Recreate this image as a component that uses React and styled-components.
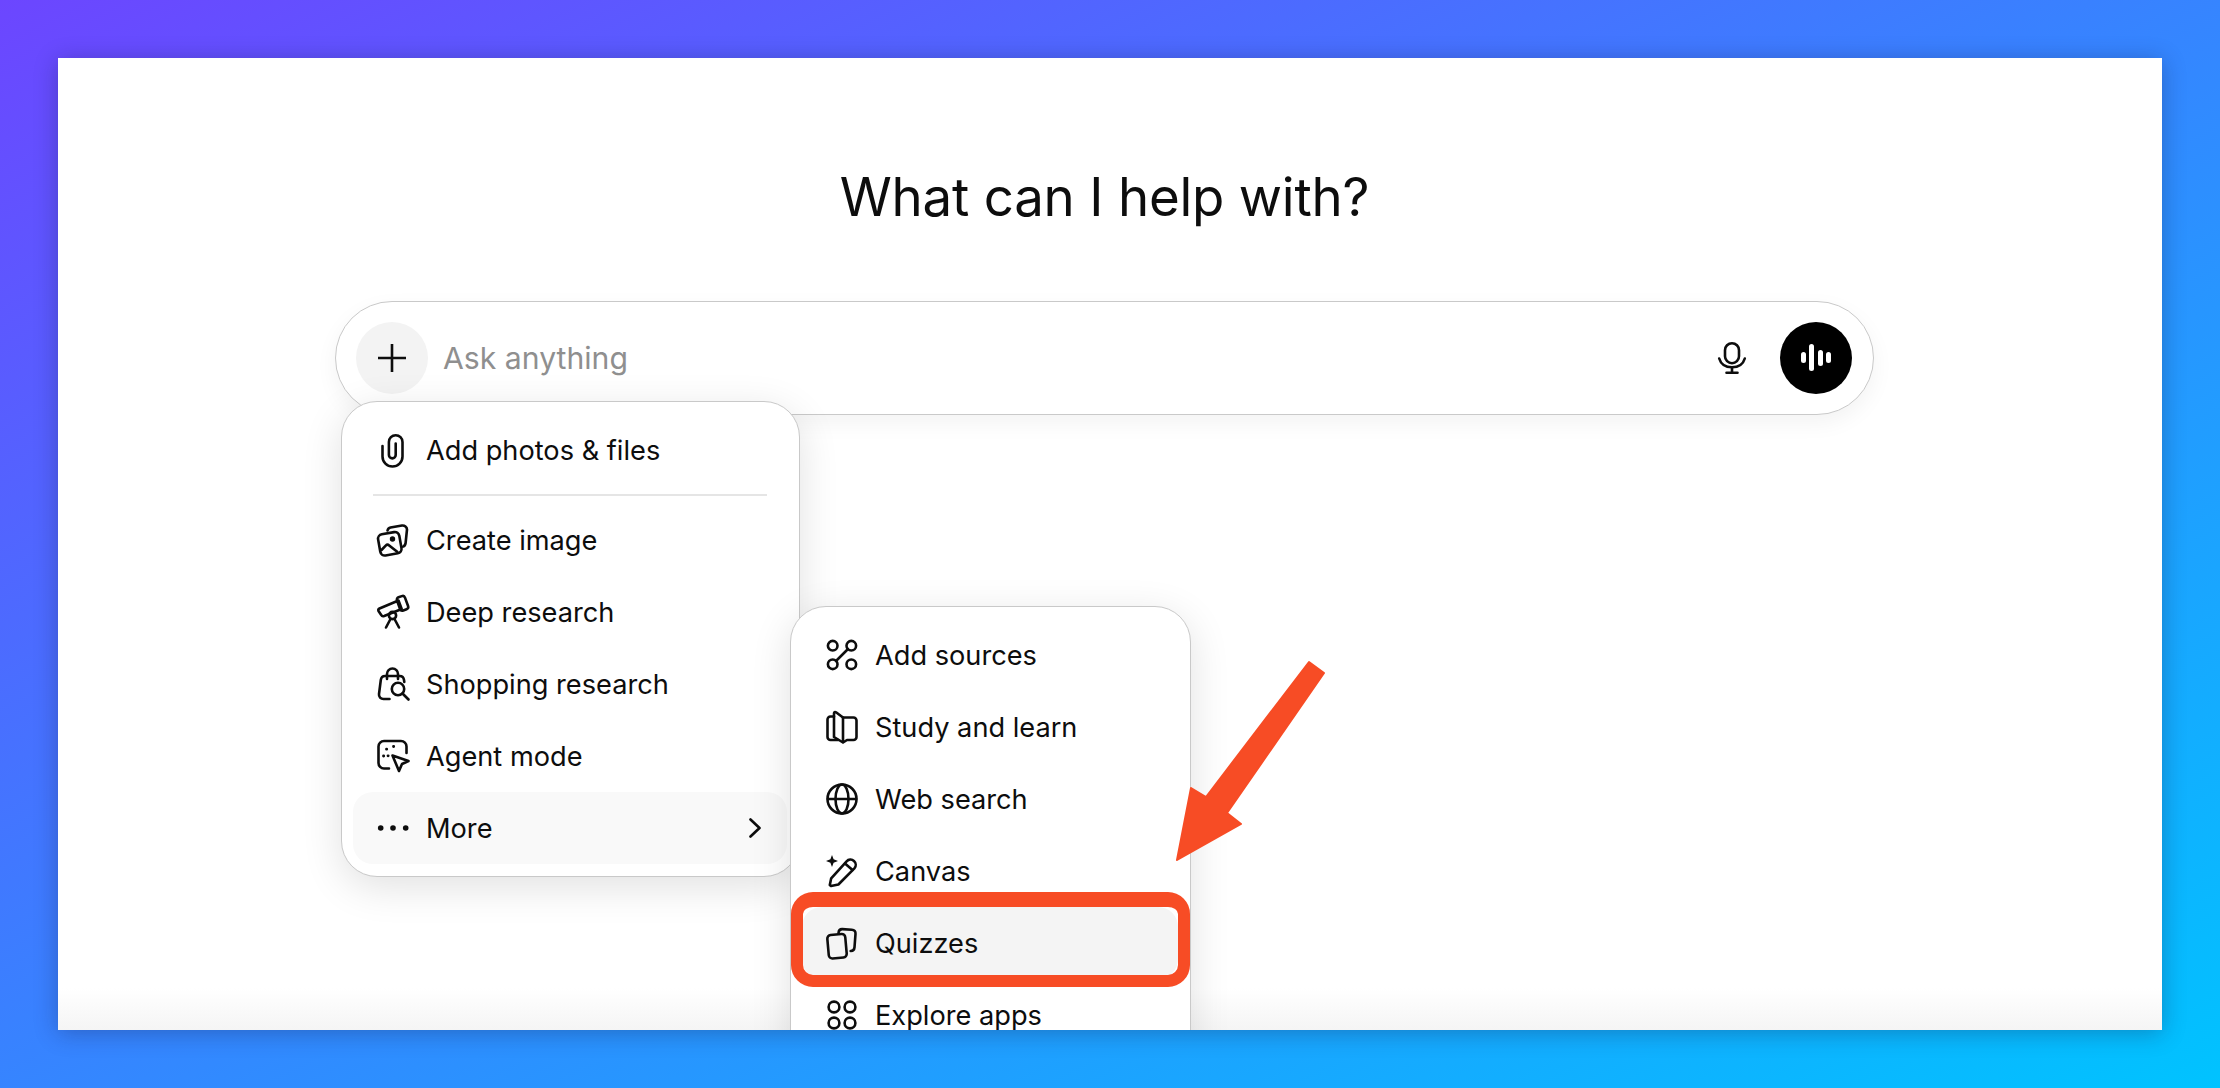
import React from 'react';
import styled, {createGlobalStyle} from 'styled-components';

const GlobalStyle = createGlobalStyle`
    html, body {
        margin: 0;
        padding: 0;
        width: 2220px;
        height: 1088px;
        overflow: hidden;
        font-family: Inter, "Liberation Sans", sans-serif;
        color: #0d0d0d;
    }
`;

//Icons, all drawn on a 32px box
const Glyph = styled.svg`
    width: 32px;
    height: 32px;
    flex: none;
    fill: none;
    stroke: currentColor;
    stroke-width: 2.6;
    stroke-linecap: round;
    stroke-linejoin: round;
    overflow: visible;
`;

const Icon = ({children}) => <Glyph viewBox="0 0 32 32">{children}</Glyph>;

const Clip = () => (
    <Icon>
        <path d="M5.500 12v10.500a10 10 0 0 0 20 0V8a6.800 6.800 0 0 0-13.600 0V21a3.400 3.400 0 0 0 6.800 0V9.500" />
    </Icon>
);
const ImageStack = () => (
    <Icon>
        <rect x="2" y="9" width="21.500" height="21.500" rx="4.500" transform="rotate(-10 13 19.500)" />
        <path d="M10.500 6.500c.4-1.600 1.400-2.700 3-3l11.500-2c2.600-.3 5 1.400 5 4l-1.400 13.500c-.2 1.800-1 3-2.600 3.600" />
        <path d="M4.500 26l4.200-4.400c1-1 2.400-1.100 3.500-.2l8 6.400" />
        <circle cx="15.500" cy="15" r="1.400" fill="currentColor" />
    </Icon>
);
const Telescope = () => (
    <Icon>
        <path d="M2.500 12.500l19-8 3.200 8.500-17.500 7c-1.500.5-2.500 0-3-1L1.500 15c-.4-1 0-2 1-2.500z" />
        <rect x="21.500" y="0.500" width="8.500" height="14" rx="2.500" transform="rotate(-20 25 8)" />
        <circle cx="15.500" cy="19.500" r="3.600" />
        <path d="M13.500 23L9 31.500M17.500 23L22 31.500" />
    </Icon>
);
const BagSearch = () => (
    <Icon>
        <path d="M12.500 31H6.500c-2.800 0-4.800-2-4.500-4.800L3.800 12c.3-2.300 2-4 4.300-4h14.600c2.300 0 4 1.700 4.300 4l.3 2" />
        <path d="M10 11V6a5.500 5.500 0 0 1 11 0V11" />
        <circle cx="21" cy="21" r="6.200" />
        <path d="M25.500 25.500L31.500 31.500" />
    </Icon>
);
const AgentCursor = () => (
    <Icon>
        <path d="M12 28.500H7a5.500 5.500 0 0 1-5.500-5.500V6.500A5.500 5.500 0 0 1 7 1h17a5.500 5.500 0 0 1 5.500 5.500V13" />
        <path d="M15.500 15.500l16 5.500-6.500 3-3 7z" />
        <path d="M9.500 9.200h.2M16.500 6.500h.2M6.500 16h.2M11 15.800h.2" strokeWidth="2.800" />
    </Icon>
);
const Dots = () => (
    <Icon>
        <circle cx="3.700" cy="16" r="2.800" fill="currentColor" stroke="none" />
        <circle cx="16" cy="16" r="2.800" fill="currentColor" stroke="none" />
        <circle cx="28.700" cy="16" r="2.800" fill="currentColor" stroke="none" />
    </Icon>
);
const Nodes = () => (
    <Icon>
        <circle cx="6.700" cy="6.700" r="4.800" />
        <circle cx="25.300" cy="6.700" r="4.800" />
        <circle cx="6.700" cy="25.300" r="4.800" />
        <circle cx="25.300" cy="25.300" r="4.800" />
        <path d="M10 22L22 10" />
    </Icon>
);
const Book = () => (
    <Icon>
        <path d="M17 6.500h10.500a3 3 0 0 1 3 3V26a3 3 0 0 1-3 3H21l-4 2.500-9-5.500V2.500c0-1.300 1-1.800 2-1.200l7 5.200z" />
        <path d="M8 5.500H4.500a3 3 0 0 0-3 3V26a3 3 0 0 0 3 3H12" />
        <path d="M17 6.500V31" />
    </Icon>
);
const Globe = () => (
    <Icon>
        <circle cx="16" cy="16" r="14.500" />
        <ellipse cx="16" cy="16" rx="6.500" ry="14.500" />
        <path d="M2 16h28" />
    </Icon>
);
const PencilSpark = () => (
    <Icon>
        <path d="M5 31l-1.200-1 1.400-6.700L20.600 6.400a5.200 5.200 0 0 1 7.800 6.900L12.400 29.500z" />
        <path d="M19 8.500l7.500 6.500" />
        <path d="M6 0l1.600 4.200L12 6 7.600 7.800 6 12 4.400 7.800 0 6l4.400-1.800z" fill="currentColor" stroke="none" />
    </Icon>
);
const Cards = () => (
    <Icon>
        <rect x="2" y="7.500" width="18" height="23.500" rx="3.500" transform="rotate(-5 11 19)" />
        <path d="M12.500 6c.2-2.500 1.500-4 3.800-3.900l9.500.6c2.500.2 3.900 1.800 3.700 4.200l-1 13.500c-.2 2.300-1.500 3.700-3.800 3.600" />
    </Icon>
);
const Apps = () => (
    <Icon>
        <circle cx="8" cy="8" r="5.400" />
        <circle cx="24" cy="8" r="5.400" />
        <circle cx="8" cy="24" r="5.400" />
        <circle cx="24" cy="24" r="5.400" />
    </Icon>
);
const Mic = () => (
    <Icon>
        <rect x="9" y="1.200" width="14" height="20" rx="7" />
        <path d="M3.200 16.500c1.600 5.500 6.500 8.800 12.800 8.800s11.200-3.300 12.800-8.800" />
        <path d="M16 25.500v5M10.500 30.800h11" />
    </Icon>
);

const mainItems = [
    {label: 'Create image', icon: <ImageStack />},
    {label: 'Deep research', icon: <Telescope />},
    {label: 'Shopping research', icon: <BagSearch />},
    {label: 'Agent mode', icon: <AgentCursor />},
];

const moreItems = [
    {label: 'Add sources', icon: <Nodes />},
    {label: 'Study and learn', icon: <Book />},
    {label: 'Web search', icon: <Globe />},
    {label: 'Canvas', icon: <PencilSpark />},
    {label: 'Quizzes', icon: <Cards />, tint: '#f4f4f4'},
    {label: 'Explore apps', icon: <Apps />},
];

const App = () => {
    return (
        <Backdrop>
            <GlobalStyle />
            <Panel>
                <Heading>What can I help with?</Heading>
                <Composer>
                    <PlusButton aria-label="Add">
                        <PlusMark viewBox="0 0 28 28">
                            <path d="M14 0v28M0 14h28" />
                        </PlusMark>
                    </PlusButton>
                    <Prompt>Ask anything</Prompt>
                    <Mic />
                    <VoiceButton aria-label="Voice">
                        <VoiceBar $height={11} />
                        <VoiceBar $height={27} />
                        <VoiceBar $height={16} />
                        <VoiceBar $height={11} />
                    </VoiceButton>
                    <Menu>
                        <Row>
                            <Clip />
                            <span>Add photos &amp; files</span>
                        </Row>
                        <Divider />
                        {mainItems.map((item) => (
                            <Row key={item.label}>
                                {item.icon}
                                <span>{item.label}</span>
                            </Row>
                        ))}
                        <Row $tint="#f9f9f9">
                            <Dots />
                            <span>More</span>
                            <Chevron viewBox="0 0 12 20">
                                <path d="M1.500 1.500L10.500 10L1.500 18.500" />
                            </Chevron>
                        </Row>
                        <SubMenu>
                            {moreItems.map((item) => (
                                <Row key={item.label} $tint={item.tint}>
                                    {item.icon}
                                    <span>{item.label}</span>
                                </Row>
                            ))}
                            <Ring />
                        </SubMenu>
                    </Menu>
                </Composer>
                <Arrow viewBox="0 0 150 205">
                    <path d="M134 2L149 13L52 153L66 164L2 200L16 128L31 137z" />
                </Arrow>
            </Panel>
        </Backdrop>
    );
};

const Backdrop = styled.div`
    width: 2220px;
    height: 1088px;
    padding: 58px;
    box-sizing: border-box;
    background: linear-gradient(to bottom right, #6c46ff, #00c3ff);
`;

const Panel = styled.main`
    position: relative;
    height: 972px;
    box-sizing: border-box;
    padding: 0 288px 0 277px;
    display: flex;
    flex-direction: column;
    align-items: center;
    overflow: hidden;
    background: linear-gradient(to bottom, #fff 930px, #f5f5f5 972px);
    box-shadow: 0 3px 22px rgba(20, 20, 60, 0.3);
`;

const Heading = styled.h1`
    margin: 104px 0 69px;
    font-size: 52.800px;
    line-height: 70px;
    font-weight: 400;
    letter-spacing: -0.2px;
`;

const Composer = styled.div`
    position: relative;
    width: 100%;
    height: 114px;
    box-sizing: border-box;
    flex: none;
    display: flex;
    align-items: center;
    padding: 0 21px 1px 20px;
    border: 1px solid #c9c9c9;
    border-radius: 57px;
    background: white;
    box-shadow: 0 8px 22px rgba(0, 0, 0, 0.05);
`;

const PlusButton = styled.div`
    width: 72px;
    height: 72px;
    flex: none;
    display: flex;
    align-items: center;
    justify-content: center;
    border-radius: 50%;
    background: #f3f3f3;
`;

const PlusMark = styled.svg`
    width: 28px;
    height: 28px;
    fill: none;
    stroke: #0d0d0d;
    stroke-width: 2.6;
`;

const Prompt = styled.div`
    flex: 1;
    margin-left: 15px;
    font-size: 30.200px;
    color: #8f8f8f;
`;

const VoiceButton = styled.div`
    width: 72px;
    height: 72px;
    margin-left: 32px;
    flex: none;
    display: flex;
    align-items: center;
    justify-content: center;
    gap: 3.500px;
    border-radius: 50%;
    background: black;
`;

const VoiceBar = styled.i`
    width: 5px;
    height: ${(props) => props.$height}px;
    border-radius: 3px;
    background: white;
`;

const Menu = styled.div`
    position: absolute;
    left: 5px;
    top: 99px;
    width: 459px;
    box-sizing: border-box;
    padding: 12px 12px 12px 11px;
    border: 1px solid #c9c9c9;
    border-radius: 36px;
    background: white;
    box-shadow: 0 10px 40px rgba(0, 0, 0, 0.12);
`;

const SubMenu = styled(Menu)`
    left: 448px;
    top: 204px;
    width: 401px;
    height: 600px;
`;

const Row = styled.div`
    height: 72px;
    display: flex;
    align-items: center;
    gap: 17px;
    padding: 0 24px;
    border-radius: 20px;
    font-size: 27.200px;
    background: ${(props) => props.$tint || 'transparent'};
`;

const Divider = styled.hr`
    height: 2px;
    margin: 8px 20px;
    border: none;
    background: #e5e5e5;
`;

const Chevron = styled.svg`
    width: 12px;
    height: 20px;
    margin-left: auto;
    margin-right: 2px;
    fill: none;
    stroke: #0d0d0d;
    stroke-width: 2.6;
    stroke-linecap: round;
    stroke-linejoin: round;
`;

const Ring = styled.div`
    position: absolute;
    left: 0;
    top: 285px;
    width: 399px;
    height: 95px;
    box-sizing: border-box;
    border: solid #f74c25;
    border-width: 15px 12px 12px;
    border-radius: 22px;
`;

const Arrow = styled.svg`
    position: absolute;
    left: 1117px;
    top: 602px;
    width: 150px;
    height: 205px;
    fill: #f74c25;
    stroke: #f74c25;
    stroke-width: 2;
    stroke-linejoin: round;
`;

export default App;
